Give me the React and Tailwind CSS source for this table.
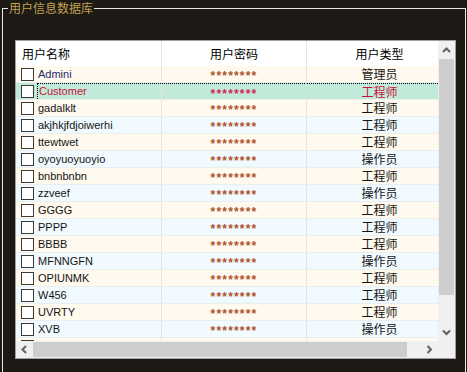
import React from 'react';

const rows = [
  { name: 'Admini', type: '管理员' },
  { name: 'Customer', type: '工程师', selected: true },
  { name: 'gadalklt', type: '工程师' },
  { name: 'akjhkjfdjoiwerhi', type: '工程师' },
  { name: 'ttewtwet', type: '工程师' },
  { name: 'oyoyuoyuoyio', type: '操作员' },
  { name: 'bnbnbnbn', type: '工程师' },
  { name: 'zzveef', type: '操作员' },
  { name: 'GGGG', type: '工程师' },
  { name: 'PPPP', type: '工程师' },
  { name: 'BBBB', type: '工程师' },
  { name: 'MFNNGFN', type: '操作员' },
  { name: 'OPIUNMK', type: '工程师' },
  { name: 'W456', type: '工程师' },
  { name: 'UVRTY', type: '工程师' },
  { name: 'XVB', type: '操作员' },
  { name: '', type: '' },
];

const latin = "font-['Liberation_Sans','Noto_Sans_CJK_SC',sans-serif]";
const cjk = "font-['Noto_Sans_CJK_SC','Liberation_Sans',sans-serif]";

function Chevron({ dir }) {
  // small grey scrollbar arrows
  const d = {
    up: 'M1 5 L4.5 1.5 L8 5',
    down: 'M1 1.5 L4.5 5 L8 1.5',
    left: 'M5 1 L1.5 4.5 L5 8',
    right: 'M1.5 1 L5 4.5 L1.5 8',
  }[dir];
  const vert = dir === 'up' || dir === 'down';
  return (
    <svg width={vert ? 9 : 7} height={vert ? 7 : 9} viewBox={vert ? '0 0 9 7' : '0 0 7 9'}>
      <path d={d} fill="none" stroke="#606060" strokeWidth="2" />
    </svg>
  );
}

function Row({ row, index }) {
  const bg = row.selected ? 'bg-[#c1ebd8]' : index % 2 === 0 ? 'bg-[#fff9ee]' : 'bg-[#f0faff]';
  const nameColor = row.selected ? 'text-[#c8103c]' : index === 0 ? 'text-[#1f2a6b]' : 'text-[#141414]';
  return (
    <div className={`flex h-[17px] shrink-0 border-b border-[#ebeef0] ${bg}`}>
      <div className="w-[146px] shrink-0 flex items-center pl-[5px] border-r border-[#e4e4e4]">
        <span className="w-[13px] h-[13px] shrink-0 border border-[#3a3a3a] bg-white" />
        <span
          className={`ml-[3px] h-full flex items-center pl-[1px] text-[11px] ${latin} ${nameColor} ${
            row.selected ? 'flex-1 border-t border-l border-dotted border-black' : ''
          }`}
        >
          {row.name}
        </span>
      </div>
      <div
        className={`w-[145px] shrink-0 flex items-start justify-center pt-[1px] border-r border-[#e4e4e4] text-[12px] font-bold tracking-[1.2px] ${latin} ${
          row.selected ? 'text-[#d0285a] border-t border-dotted border-t-black' : 'text-[#b0542c]'
        }`}
      >
        {row.name ? '********' : ''}
      </div>
      <div
        className={`w-[145px] shrink-0 flex items-center justify-center text-[12px] ${cjk} ${
          row.selected ? 'text-[#c8103c] border-t border-dotted border-black' : 'text-[#141414]'
        }`}
      >
        {row.type}
      </div>
    </div>
  );
}

export default function App() {
  return (
    <div className="w-[467px] h-[372px] bg-[#1d1a16] overflow-hidden">
      <fieldset className="ml-[2px] w-[464px] h-[380px] border border-[#e8e8e8]">
        <legend className={`ml-[5px] px-[1px] text-[12px] leading-[16px] text-[#c0a050] ${cjk}`}>
          用户信息数据库
        </legend>

        {/* list control */}
        <div className="ml-[12px] mt-[24px] w-[441px] h-[319px] border border-[#a0a0a0] bg-white flex flex-col">
          <div className="flex h-[300px]">
            <div className="w-[422px] overflow-hidden flex flex-col">
              {/* header */}
              <div className={`flex h-[25px] shrink-0 bg-white text-[12px] text-black ${cjk}`}>
                <div className="w-[146px] shrink-0 flex items-center pl-[6px] border-r border-[#e4e4e4]">用户名称</div>
                <div className="w-[145px] shrink-0 flex items-center justify-center border-r border-[#e4e4e4]">用户密码</div>
                <div className="w-[145px] shrink-0 flex items-center justify-center">用户类型</div>
              </div>
              {rows.map((r, i) => (
                <Row key={i} row={r} index={i} />
              ))}
            </div>
            {/* vertical scrollbar */}
            <div className="w-[17px] bg-[#f0f0f0] flex flex-col">
              <div className="h-[18px] flex items-center justify-center">
                <Chevron dir="up" />
              </div>
              <div className="mx-[1px] h-[236px] bg-[#cdcdcd]" />
              <div className="flex-1" />
              <div className="h-[17px] flex items-center justify-center">
                <Chevron dir="down" />
              </div>
            </div>
          </div>
          {/* horizontal scrollbar */}
          <div className="flex h-[17px]">
            <div className="w-[422px] bg-[#f0f0f0] flex items-center">
              <div className="w-[17px] h-full flex items-center justify-center">
                <Chevron dir="left" />
              </div>
              <div className="w-[374px] h-[15px] bg-[#cdcdcd]" />
              <div className="flex-1" />
              <div className="w-[17px] h-full flex items-center justify-center">
                <Chevron dir="right" />
              </div>
            </div>
            <div className="w-[17px] bg-[#f0f0f0]" />
          </div>
        </div>
      </fieldset>
    </div>
  );
}
